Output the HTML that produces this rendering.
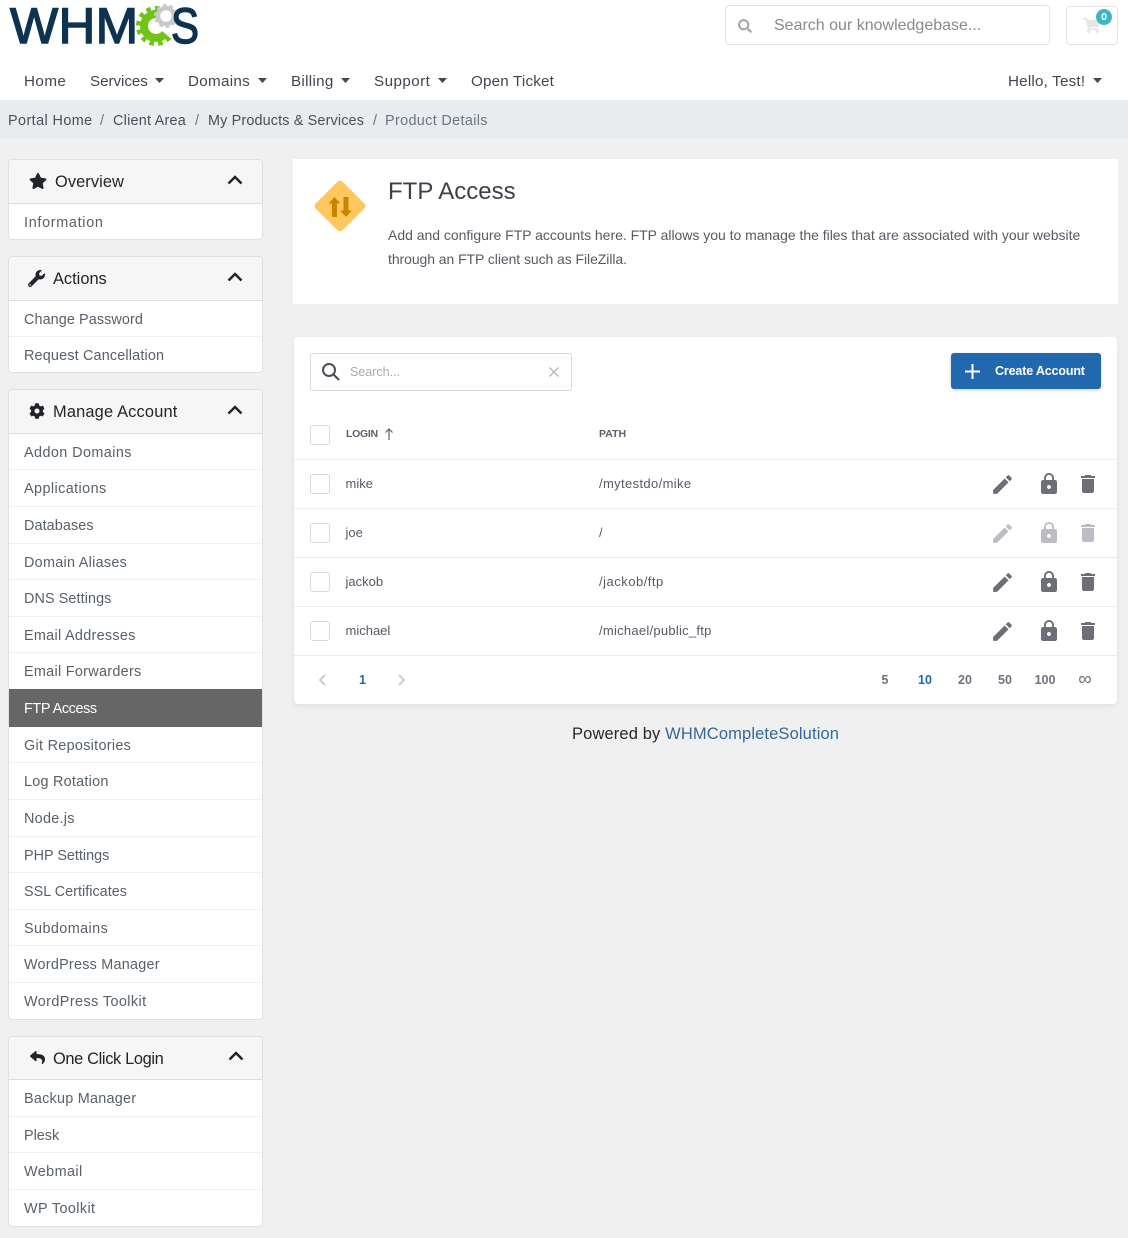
<!DOCTYPE html>
<html lang="en"><head><meta charset="utf-8"><title>FTP Access</title>
<style>
*{box-sizing:border-box}
html,body{margin:0;padding:0}
body{width:1128px;height:1238px;position:relative;overflow:hidden;background:#f0f0f0;font-family:"Liberation Sans",sans-serif;color:#333}
.a{position:absolute}
.t{position:absolute;white-space:nowrap;line-height:20px}
.nav{font-size:15.2px;letter-spacing:.45px;color:#3f4650;top:72px}
.bc{font-size:14.4px;letter-spacing:.42px;color:#495057;top:111px}
.sep{color:#6c757d}
.panel{position:absolute;left:8px;width:255px;background:#fff;border:1px solid #e0e0e0;border-radius:4px}
.ph{position:absolute;left:0;top:0;right:0;height:44px;background:#f6f6f6;border-bottom:1px solid #ddd;border-radius:3px 3px 0 0}
.pt{font-size:16.4px;color:#212529}
.i{font-size:14.4px;letter-spacing:.3px;color:#586069;left:24px}
.l{position:absolute;left:9px;width:253px;height:1px;background:#f0f0f0}
.r{font-size:13px;color:#555b66}
.rl{position:absolute;left:294px;width:823px;height:1px;background:#ebebeb}
.cb{position:absolute;left:310px;width:20px;height:20px;border:1px solid #d9d9e2;border-radius:3px;background:#fff}
.pg{font-size:12.5px;font-weight:bold;color:#6d727c;text-align:center;width:40px;top:670px}
svg{position:absolute;display:block;overflow:visible}
</style></head><body>
<svg width="0" height="0" style="position:absolute"><defs>
<symbol id="chev" viewBox="0 0 16 10"><path d="M1.500 8.500L8 2l6.500 6.500" fill="none" stroke="#212529" stroke-width="2.500"/></symbol>
<symbol id="edit" viewBox="0 0 24 24"><path d="M3 17.250V21h3.750L17.810 9.940l-3.750-3.750L3 17.250zM20.710 7.040c.39-.39.39-1.020 0-1.410l-2.340-2.340c-.39-.39-1.020-.39-1.410 0l-1.830 1.830 3.750 3.750 1.830-1.830z"/></symbol>
<symbol id="lock" viewBox="0 0 24 24"><path d="M18 8h-1V6c0-2.760-2.240-5-5-5S7 3.240 7 6v2H6c-1.100 0-2 .9-2 2v10c0 1.100.9 2 2 2h12c1.100 0 2-.9 2-2V10c0-1.100-.9-2-2-2zm-6 9c-1.100 0-2-.9-2-2s.9-2 2-2 2 .9 2 2-.9 2-2 2zm3.100-9H8.900V6c0-1.710 1.390-3.100 3.100-3.100 1.710 0 3.100 1.390 3.100 3.100v2z"/></symbol>
<symbol id="trash" viewBox="0 0 24 24"><path d="M6 19c0 1.100.9 2 2 2h8c1.100 0 2-.9 2-2V7H6v12zM19 4h-3.500l-1-1h-5l-1 1H5v2h14V4z"/></symbol>
</defs></svg>

<!-- header -->
<div class="a" style="left:0;top:0;width:1128px;height:100px;background:#fff"></div>
<div class="t" style="left:10px;top:1px;font-size:50px;line-height:50px;color:#0d3350;-webkit-text-stroke:1.400px #0d3350;transform-origin:0 0;transform:scaleX(1.02);letter-spacing:.3px">WHM</div>
<svg style="left:130px;top:0" width="60" height="50" viewBox="0 0 60 50">
<g fill="none">
<path d="M37.300 21.900A12 12 0 1 0 35.200 33.700" stroke="#6fc513" stroke-width="8"/>
<path d="M36.900 13A17 17 0 1 0 39 36.900" stroke="#6fc513" stroke-width="6" stroke-dasharray="4.400 4"/>
<circle cx="36" cy="16" r="8" fill="#fff" stroke="#c9c9c9" stroke-width="4.500"/>
<circle cx="36" cy="16" r="10.500" stroke="#c9c9c9" stroke-width="3" stroke-dasharray="3.300 3.300"/></g>
</svg>
<div class="t" style="left:171px;top:1px;font-size:50px;line-height:50px;color:#0d3350;-webkit-text-stroke:1.400px #0d3350;transform-origin:0 0;transform:scaleX(.84)">S</div>

<div class="a" style="left:725px;top:5px;width:325px;height:40px;border:1px solid #e3e3e3;border-radius:4px;background:#fff"></div>
<svg style="left:738px;top:19px;fill:#aaa" width="14" height="14" viewBox="0 0 512 512"><path d="M505 442.700L405.300 343c-4.500-4.500-10.600-7-17-7H372c27.600-35.300 44-79.700 44-128C416 93.100 322.900 0 208 0S0 93.100 0 208s93.100 208 208 208c48.300 0 92.700-16.400 128-44v16.300c0 6.400 2.500 12.500 7 17l99.700 99.700c9.400 9.400 24.600 9.400 33.900 0l28.300-28.300c9.400-9.400 9.400-24.600.1-34zM208 336c-70.700 0-128-57.200-128-128 0-70.700 57.200-128 128-128 70.700 0 128 57.200 128 128 0 70.700-57.200 128-128 128z"/></svg>
<div class="t" style="left:774px;top:16px;font-size:16px;color:#868b90">Search our knowledgebase...</div>
<div class="a" style="left:1066px;top:6px;width:52px;height:39px;border:1px solid #e3e3e3;border-radius:4px;background:#fff"></div>
<svg style="left:1083px;top:18px;fill:#e6e6e6" width="17" height="15" viewBox="0 0 576 512"><path d="M528.120 301.319l47.273-208C578.806 78.301 567.391 64 551.990 64H159.208l-9.166-44.810C147.758 8.021 137.930 0 126.529 0H24C10.745 0 0 10.745 0 24v16c0 13.255 10.745 24 24 24h69.883l70.248 343.435C147.325 417.100 136 435.222 136 456c0 30.928 25.072 56 56 56s56-25.072 56-56c0-15.674-6.447-29.835-16.824-40h209.647C430.447 426.165 424 440.326 424 456c0 30.928 25.072 56 56 56s56-25.072 56-56c0-22.172-12.888-41.332-31.579-50.405l5.517-24.276c3.413-15.018-8.002-29.319-23.403-29.319H218.117l-6.545-32h293.145c11.206 0 20.920-7.754 23.403-18.681z"/></svg>
<div class="a" style="left:1096px;top:9px;width:16px;height:16px;border-radius:50%;background:#3fb4c6;color:#fff;font-size:10.500px;font-weight:bold;line-height:16px;text-align:center">0</div>

<div class="t nav" style="left:24px">Home</div>
<div class="t nav" style="left:90px;letter-spacing:-.05px">Services</div>
<div class="t nav" style="left:188px;letter-spacing:.3px">Domains</div>
<div class="t nav" style="left:291px;letter-spacing:.3px">Billing</div>
<div class="t nav" style="left:374px">Support</div>
<div class="t nav" style="left:471px;letter-spacing:.18px">Open Ticket</div>
<div class="t nav" style="left:1008px;letter-spacing:.2px">Hello, Test!</div>
<svg style="left:155px;top:78px;fill:#3f4650" width="9" height="5"><path d="M0 0h9L4.500 5z"/></svg>
<svg style="left:258px;top:78px;fill:#3f4650" width="9" height="5"><path d="M0 0h9L4.500 5z"/></svg>
<svg style="left:341px;top:78px;fill:#3f4650" width="9" height="5"><path d="M0 0h9L4.500 5z"/></svg>
<svg style="left:438px;top:78px;fill:#3f4650" width="9" height="5"><path d="M0 0h9L4.500 5z"/></svg>
<svg style="left:1093px;top:78px;fill:#3f4650" width="9" height="5"><path d="M0 0h9L4.500 5z"/></svg>

<!-- breadcrumb -->
<div class="a" style="left:0;top:100px;width:1128px;height:39px;background:#e9ecef"></div>
<div class="t bc" style="left:8px">Portal Home</div>
<div class="t bc sep" style="left:100px">/</div>
<div class="t bc" style="left:113px;letter-spacing:.24px">Client Area</div>
<div class="t bc sep" style="left:195px">/</div>
<div class="t bc" style="left:208px;letter-spacing:.15px">My Products &amp; Services</div>
<div class="t bc sep" style="left:373px">/</div>
<div class="t bc" style="left:385px;color:#6c757d;letter-spacing:.35px">Product Details</div>

<!-- sidebar panels -->
<div class="panel" style="top:159px;height:81px"><div class="ph"></div></div>
<svg style="left:29px;top:173px;fill:#212529" width="18" height="16" viewBox="0 0 576 512"><path d="M259.300 17.800L194 150.200 47.900 171.500c-26.200 3.800-36.700 36.100-17.700 54.600l105.700 103-25 145.500c-4.500 26.300 23.200 46 46.400 33.700L288 439.600l130.700 68.700c23.200 12.200 50.900-7.400 46.400-33.700l-25-145.500 105.700-103c19-18.500 8.500-50.800-17.700-54.600L382 150.200 316.700 17.800c-11.700-23.600-45.600-23.900-57.400 0z"/></svg>
<div class="t pt" style="left:55px;top:172px;letter-spacing:.08px">Overview</div>
<svg style="left:227px;top:175px" width="16" height="10"><use href="#chev"/></svg>
<div class="t i" style="top:213px;letter-spacing:.69px">Information</div>

<div class="panel" style="top:256px;height:117px"><div class="ph"></div></div>
<svg style="left:28px;top:270px;fill:#212529" width="17" height="17" viewBox="0 0 512 512"><path d="M507.730 109.100c-2.240-9.030-13.540-12.090-20.120-5.510l-74.360 74.360-67.880-11.310-11.310-67.880 74.360-74.360c6.620-6.620 3.430-17.900-5.660-20.160-47.380-11.740-99.550.91-136.580 37.930-39.640 39.640-50.550 97.100-34.050 147.200L18.740 402.760c-24.990 24.990-24.990 65.510 0 90.500 24.990 24.990 65.510 24.990 90.500 0l213.210-213.210c50.120 16.710 107.470 5.680 147.370-34.220 37.070-37.070 49.700-89.320 37.910-136.730zM64 472c-13.250 0-24-10.750-24-24 0-13.260 10.750-24 24-24s24 10.740 24 24c0 13.250-10.750 24-24 24z"/></svg>
<div class="t pt" style="left:53px;top:269px">Actions</div>
<svg style="left:227px;top:272px" width="16" height="10"><use href="#chev"/></svg>
<div class="t i" style="top:310px;letter-spacing:.09px">Change Password</div>
<div class="l" style="top:336px"></div>
<div class="t i" style="top:346px;letter-spacing:.17px">Request Cancellation</div>

<div class="panel" style="top:389px;height:631px"><div class="ph"></div></div>
<svg style="left:29px;top:403px;fill:#212529" width="16" height="16" viewBox="0 0 512 512"><path d="M487.400 315.700l-42.600-24.600c4.300-23.200 4.300-47 0-70.200l42.600-24.600c4.900-2.800 7.100-8.600 5.500-14-11.100-35.600-30-67.800-54.700-94.600-3.800-4.100-10-5.100-14.800-2.300L380.800 110c-17.900-15.400-38.500-27.300-60.800-35.100V25.800c0-5.600-3.900-10.500-9.400-11.700-36.700-8.200-74.300-7.800-109.200 0-5.500 1.200-9.400 6.100-9.400 11.700V75c-22.200 7.900-42.800 19.800-60.800 35.100L88.700 85.500c-4.900-2.800-11-1.900-14.800 2.300-24.700 26.700-43.600 58.900-54.700 94.600-1.700 5.400.6 11.200 5.500 14L67.300 221c-4.300 23.200-4.300 47 0 70.200l-42.600 24.600c-4.900 2.800-7.100 8.600-5.500 14 11.100 35.600 30 67.800 54.700 94.600 3.800 4.100 10 5.100 14.800 2.300l42.600-24.600c17.900 15.400 38.500 27.300 60.800 35.100v49.200c0 5.600 3.900 10.500 9.400 11.700 36.700 8.200 74.300 7.800 109.200 0 5.500-1.200 9.400-6.100 9.400-11.700v-49.200c22.200-7.900 42.800-19.800 60.800-35.100l42.600 24.600c4.900 2.800 11 1.900 14.800-2.300 24.700-26.700 43.600-58.900 54.700-94.600 1.500-5.500-.7-11.300-5.600-14.100zM256 336c-44.100 0-80-35.900-80-80s35.900-80 80-80 80 35.900 80 80-35.900 80-80 80z"/></svg>
<div class="t pt" style="left:53px;top:402px;letter-spacing:.17px">Manage Account</div>
<svg style="left:227px;top:405px" width="16" height="10"><use href="#chev"/></svg>
<div class="t i" style="top:443px;letter-spacing:.42px">Addon Domains</div><div class="l" style="top:469px"></div>
<div class="t i" style="top:479px;letter-spacing:.42px">Applications</div><div class="l" style="top:506px"></div>
<div class="t i" style="top:516px;letter-spacing:.09px">Databases</div><div class="l" style="top:543px"></div>
<div class="t i" style="top:553px;letter-spacing:.28px">Domain Aliases</div><div class="l" style="top:579px"></div>
<div class="t i" style="top:589px;letter-spacing:.09px">DNS Settings</div><div class="l" style="top:616px"></div>
<div class="t i" style="top:626px;letter-spacing:.3px">Email Addresses</div><div class="l" style="top:652px"></div>
<div class="t i" style="top:662px;letter-spacing:.3px">Email Forwarders</div>
<div class="a" style="left:9px;top:689px;width:253px;height:38px;background:#666"></div>
<div class="t i" style="top:699px;color:#fff;letter-spacing:-.38px">FTP Access</div>
<div class="t i" style="top:736px;letter-spacing:.3px">Git Repositories</div><div class="l" style="top:762px"></div>
<div class="t i" style="top:772px;letter-spacing:.25px">Log Rotation</div><div class="l" style="top:799px"></div>
<div class="t i" style="top:809px;letter-spacing:.28px">Node.js</div><div class="l" style="top:836px"></div>
<div class="t i" style="top:846px;letter-spacing:0">PHP Settings</div><div class="l" style="top:872px"></div>
<div class="t i" style="top:882px;letter-spacing:.02px">SSL Certificates</div><div class="l" style="top:909px"></div>
<div class="t i" style="top:919px;letter-spacing:.42px">Subdomains</div><div class="l" style="top:945px"></div>
<div class="t i" style="top:955px;letter-spacing:.24px">WordPress Manager</div><div class="l" style="top:982px"></div>
<div class="t i" style="top:992px;letter-spacing:.42px">WordPress Toolkit</div>

<div class="panel" style="top:1036px;height:191px"><div class="ph" style="height:43px"></div></div>
<svg style="left:29px;top:1050px;fill:#212529" width="17" height="15" viewBox="0 0 512 512"><path d="M8.309 189.836L184.313 37.851C199.719 24.546 224 35.347 224 56.015v80.053c160.629 1.839 288 34.032 288 186.258 0 61.441-39.581 122.309-83.333 154.132-13.653 9.931-33.111-2.533-28.077-18.631 45.344-145.012-21.507-183.510-176.590-185.742V360c0 20.700-24.300 31.453-39.687 18.164l-176.004-152c-11.071-9.562-11.086-26.753 0-36.328z"/></svg>
<div class="t pt" style="left:53px;top:1049px;letter-spacing:-.35px">One Click Login</div>
<svg style="left:228px;top:1051px" width="16" height="10"><use href="#chev"/></svg>
<div class="t i" style="top:1089px;letter-spacing:.25px">Backup Manager</div><div class="l" style="top:1116px"></div>
<div class="t i" style="top:1126px;letter-spacing:0">Plesk</div><div class="l" style="top:1152px"></div>
<div class="t i" style="top:1162px;letter-spacing:.42px">Webmail</div><div class="l" style="top:1189px"></div>
<div class="t i" style="top:1199px;letter-spacing:.4px">WP Toolkit</div>

<!-- intro card -->
<div class="a" style="left:293px;top:159px;width:825px;height:145px;background:#fff"></div>
<svg style="left:313px;top:179px" width="54" height="54" viewBox="0 0 54 54"><rect x="8" y="8" width="38" height="38" rx="3.500" transform="rotate(45 27 27)" fill="#ffc85f"/><path d="M19 38V24.500h-3.500l6-6.500 6 6.500H24V38zM30.500 18v13.500H27l6 6.500 6-6.500h-3.500V18z" fill="#c98400"/></svg>
<div class="t" style="left:388px;top:177px;font-size:24px;line-height:30px;color:#3c4249">FTP Access</div>
<div class="t" style="left:388px;top:225px;font-size:14px;letter-spacing:-.02px;color:#555b62">Add and configure FTP accounts here. FTP allows you to manage the files that are associated with your website</div>
<div class="t" style="left:388px;top:249px;font-size:14px;letter-spacing:-.07px;color:#555b62">through an FTP client such as FileZilla.</div>

<!-- table card -->
<div class="a" style="left:294px;top:337px;width:823px;height:367px;background:#fff;border-radius:4px;box-shadow:0 2px 6px rgba(0,0,0,.07)"></div>
<div class="a" style="left:310px;top:353px;width:262px;height:38px;border:1px solid #d9d9e2;border-radius:3px;background:#fff"></div>
<svg style="left:321px;top:362px" width="20" height="20" viewBox="0 0 20 20"><circle cx="8" cy="8" r="6" fill="none" stroke="#4a4f5a" stroke-width="2"/><path d="M12.500 12.500L18 18" stroke="#4a4f5a" stroke-width="2.200"/></svg>
<div class="t" style="left:350px;top:362px;font-size:12.500px;color:#a9abb0">Search...</div>
<svg style="left:549px;top:367px" width="10" height="10" viewBox="0 0 10 10"><path d="M.5.500l9 9M9.500.500l-9 9" stroke="#b5b5b5" stroke-width="1.300"/></svg>
<div class="a" style="left:951px;top:353px;width:150px;height:36px;background:#2268ae;border-radius:3px;box-shadow:0 1px 3px rgba(0,0,0,.2)"></div>
<svg style="left:965px;top:364px" width="15" height="15" viewBox="0 0 15 15"><path d="M7.500 0v15M0 7.500h15" stroke="#fff" stroke-width="2"/></svg>
<div class="t" style="left:995px;top:361px;font-size:12.500px;font-weight:bold;letter-spacing:-.15px;color:#fff">Create Account</div>

<div class="cb" style="top:425px"></div>
<div class="t" style="left:346px;top:424px;font-size:10.500px;font-weight:bold;letter-spacing:-.3px;color:#5c616b">LOGIN</div>
<svg style="left:384px;top:428px" width="10" height="12" viewBox="0 0 10 12"><path d="M5 12V1M1.500 4.500L5 1l3.500 3.500" fill="none" stroke="#5c616b" stroke-width="1.200"/></svg>
<div class="t" style="left:599px;top:424px;font-size:10.500px;font-weight:bold;color:#5c616b">PATH</div>

<div class="rl" style="top:459px"></div>
<div class="cb" style="top:474px"></div>
<div class="t r" style="left:345.500px;top:474px">mike</div>
<div class="t r" style="left:599px;top:474px;letter-spacing:.36px">/mytestdo/mike</div>
<svg style="left:989.500px;top:472px;fill:#6d6f78" width="25" height="25"><use href="#edit"/></svg>
<svg style="left:1037px;top:472px;fill:#6d6f78" width="24" height="24"><use href="#lock"/></svg>
<svg style="left:1076px;top:472px;fill:#6d6f78" width="24" height="24"><use href="#trash"/></svg>

<div class="rl" style="top:508px"></div>
<div class="cb" style="top:523px"></div>
<div class="t r" style="left:345.500px;top:523px">joe</div>
<div class="t r" style="left:599px;top:523px">/</div>
<svg style="left:989.500px;top:521px;fill:#bcbdc2" width="25" height="25"><use href="#edit"/></svg>
<svg style="left:1037px;top:521px;fill:#bcbdc2" width="24" height="24"><use href="#lock"/></svg>
<svg style="left:1076px;top:521px;fill:#bcbdc2" width="24" height="24"><use href="#trash"/></svg>

<div class="rl" style="top:557px"></div>
<div class="cb" style="top:572px"></div>
<div class="t r" style="left:345.500px;top:572px">jackob</div>
<div class="t r" style="left:599px;top:572px;letter-spacing:.5px">/jackob/ftp</div>
<svg style="left:989.500px;top:570px;fill:#6d6f78" width="25" height="25"><use href="#edit"/></svg>
<svg style="left:1037px;top:570px;fill:#6d6f78" width="24" height="24"><use href="#lock"/></svg>
<svg style="left:1076px;top:570px;fill:#6d6f78" width="24" height="24"><use href="#trash"/></svg>

<div class="rl" style="top:606px"></div>
<div class="cb" style="top:621px"></div>
<div class="t r" style="left:345.500px;top:621px">michael</div>
<div class="t r" style="left:599px;top:621px;letter-spacing:.26px">/michael/public_ftp</div>
<svg style="left:989.500px;top:619px;fill:#6d6f78" width="25" height="25"><use href="#edit"/></svg>
<svg style="left:1037px;top:619px;fill:#6d6f78" width="24" height="24"><use href="#lock"/></svg>
<svg style="left:1076px;top:619px;fill:#6d6f78" width="24" height="24"><use href="#trash"/></svg>

<div class="rl" style="top:655px"></div>
<svg style="left:318px;top:674px" width="8" height="12" viewBox="0 0 8 12"><path d="M7 1L2 6l5 5" fill="none" stroke="#c8c8c8" stroke-width="1.800"/></svg>
<div class="t" style="left:359px;top:670px;font-size:12.500px;font-weight:bold;color:#2268ae">1</div>
<svg style="left:398px;top:674px" width="8" height="12" viewBox="0 0 8 12"><path d="M1 1l5 5-5 5" fill="none" stroke="#c8c8c8" stroke-width="1.800"/></svg>
<div class="t pg" style="left:865px">5</div>
<div class="t pg" style="left:905px;color:#2268ae">10</div>
<div class="t pg" style="left:945px">20</div>
<div class="t pg" style="left:985px">50</div>
<div class="t pg" style="left:1025px">100</div>
<div class="t pg" style="left:1065px;font-size:19px;font-weight:normal">∞</div>

<div class="t" style="left:572px;top:724px;font-size:16.500px;letter-spacing:.13px;color:#23282d">Powered by <span style="color:#33689c">WHMCompleteSolution</span></div>
</body></html>
